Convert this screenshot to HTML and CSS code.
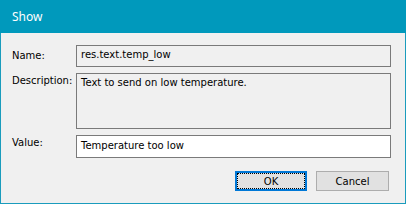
FILE: index.html
```html
<!DOCTYPE html>
<html>
<head>
<meta charset="utf-8">
<link rel="stylesheet" href="styles.css">
</head>
<body>
<div class="window">
  <div class="titlebar">Show</div>
  <div class="content">
    <div class="form">
      <div class="label label-name">Name:</div>
      <div class="field field-name">res.text.temp_low</div>
      <div class="label label-desc">Description:</div>
      <div class="field field-desc">Text to send on low temperature.</div>
      <div class="label label-value">Value:</div>
      <div class="field field-value">Temperature too low</div>
    </div>
    <div class="buttons">
      <div class="btn btn-default"><span class="focus">OK</span></div>
      <div class="btn">Cancel</div>
    </div>
  </div>
</div>
</body>
</html>
```
FILE: styles.css
```css
html, body {
  margin: 0;
  padding: 0;
}
body {
  width: 406px;
  height: 204px;
  overflow: hidden;
  background: #f0f0f0;
}
.window {
  box-sizing: border-box;
  width: 406px;
  height: 204px;
  border: 1px solid #1a9cbd;
  border-top: none;
  background: #f0f0f0;
  font-family: "DejaVu Sans", Verdana, sans-serif;
  font-size: 10px;
  color: #000;
}
.titlebar {
  height: 33px;
  margin: 0 -1px;
  background: #0099bc;
  color: #fff;
  font-family: "Noto Sans", "Open Sans", sans-serif;
  font-size: 12px;
  line-height: 33px;
  padding-left: 12px;
  box-sizing: border-box;
}
.content {
  padding: 12px 14px 0 11px;
}
.form {
  display: grid;
  grid-template-columns: 64px 315px;
  grid-template-rows: 22px 56px 23px;
  row-gap: 6px;
}
.label {
  line-height: 13px;
}
.label-name { padding-top: 4px; }
.label-desc { padding-top: 1px; }
.label-value { padding-top: 1px; }
.field {
  box-sizing: border-box;
  border: 1px solid #7a7a7a;
  background: #f0f0f0;
  line-height: 13px;
  padding: 2px 4px;
}
.field-value {
  background: #fff;
  padding-top: 3px;
}
.buttons {
  display: flex;
  justify-content: flex-end;
  gap: 9px;
  margin-top: 13px;
  padding-right: 2px;
}
.btn {
  box-sizing: border-box;
  width: 73px;
  height: 20px;
  background: #e1e1e1;
  border: 1px solid #adadad;
  display: flex;
  align-items: center;
  justify-content: center;
  line-height: 13px;
}
.btn-default {
  width: 72px;
  border: 2px solid #0078d7;
  padding: 0;
}
.focus {
  box-sizing: border-box;
  display: flex;
  align-items: center;
  justify-content: center;
  width: 100%;
  height: 100%;
  border: 1px dotted #000;
}
```
